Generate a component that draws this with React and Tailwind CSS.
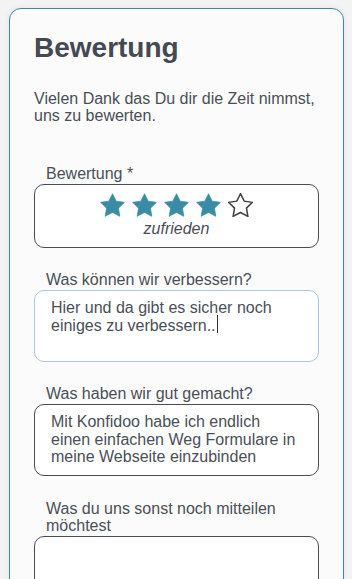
const font = { fontFamily: '"Liberation Sans", Arial, sans-serif' };

function Star({ filled }) {
  return (
    <svg width="25" height="24" viewBox="1.5 1.5 21 20" className="block">
      <path
        d="M12 2l3.09 6.26L22 9.27l-5 4.87 1.18 6.88L12 17.77l-6.18 3.25L7 14.14 2 9.27l6.91-1.01L12 2z"
        fill={filled ? '#3a8ba5' : 'none'}
        stroke={filled ? '#3a8ba5' : '#3f434a'}
        strokeWidth={filled ? 0.6 : 1.3}
        strokeLinejoin="miter"
      />
    </svg>
  );
}

function Field({ label, children, className = '' }) {
  return (
    <div className={className}>
      <div className="pl-3 pr-3 text-[16px] leading-[17px] text-[#4a4f57]">{label}</div>
      {children}
    </div>
  );
}

function TextBox({ focused, children }) {
  return (
    <div
      className={`mt-[2px] h-[72px] rounded-[10px] border bg-white pl-[16px] pr-3 pt-[8px] text-[16px] leading-[17.5px] text-[#4a4f57] ${
        focused ? 'border-[#aac6ea]' : 'border-[#4a4d55]'
      }`}
    >
      {children}
    </div>
  );
}

export default function App() {
  return (
    <div className="min-h-[579px] overflow-hidden bg-[#f3f3f3] pl-[9px] pr-[8px] pt-[8px]" style={font}>
      <div className="h-[600px] rounded-[12px] border border-[#3b8aa4] bg-[#fbfbfb] px-6 pt-[22px] shadow-[0_0_6px_rgba(0,0,0,0.06)]">
        <h1 className="text-[28px] font-bold leading-[34px] text-[#454a52]">Bewertung</h1>
        <p className="mt-[25px] text-[16px] leading-[17px] text-[#4a4f57]">
          Vielen Dank das Du dir die Zeit nimmst,
          <br />
          uns zu bewerten.
        </p>

        <Field label="Bewertung *" className="mt-[41px]">
          <div className="mt-[2px] flex h-[64px] flex-col items-center rounded-[10px] border border-[#4a4d55] bg-white pt-[8px]">
            <div className="flex gap-[7px]">
              <Star filled />
              <Star filled />
              <Star filled />
              <Star filled />
              <Star />
            </div>
            <div className="mt-[3px] text-[16px] italic leading-[17px] text-[#4a4f57]">zufrieden</div>
          </div>
        </Field>

        <Field label="Was können wir verbessern?" className="mt-[23px]">
          <TextBox focused>
            Hier und da gibt es sicher noch
            <br />
            einiges zu verbessern..
            <span className="relative">
              <span className="absolute left-[1px] top-[-2px] h-[18px] w-px bg-[#333]" />
            </span>
          </TextBox>
        </Field>

        <Field label="Was haben wir gut gemacht?" className="mt-[23px]">
          <TextBox>
            Mit Konfidoo habe ich endlich
            <br />
            einen einfachen Weg Formulare in
            <br />
            meine Webseite einzubinden
          </TextBox>
        </Field>

        <Field label="Was du uns sonst noch mitteilen möchtest" className="mt-[24px]">
          <TextBox />
        </Field>
      </div>
    </div>
  );
}
